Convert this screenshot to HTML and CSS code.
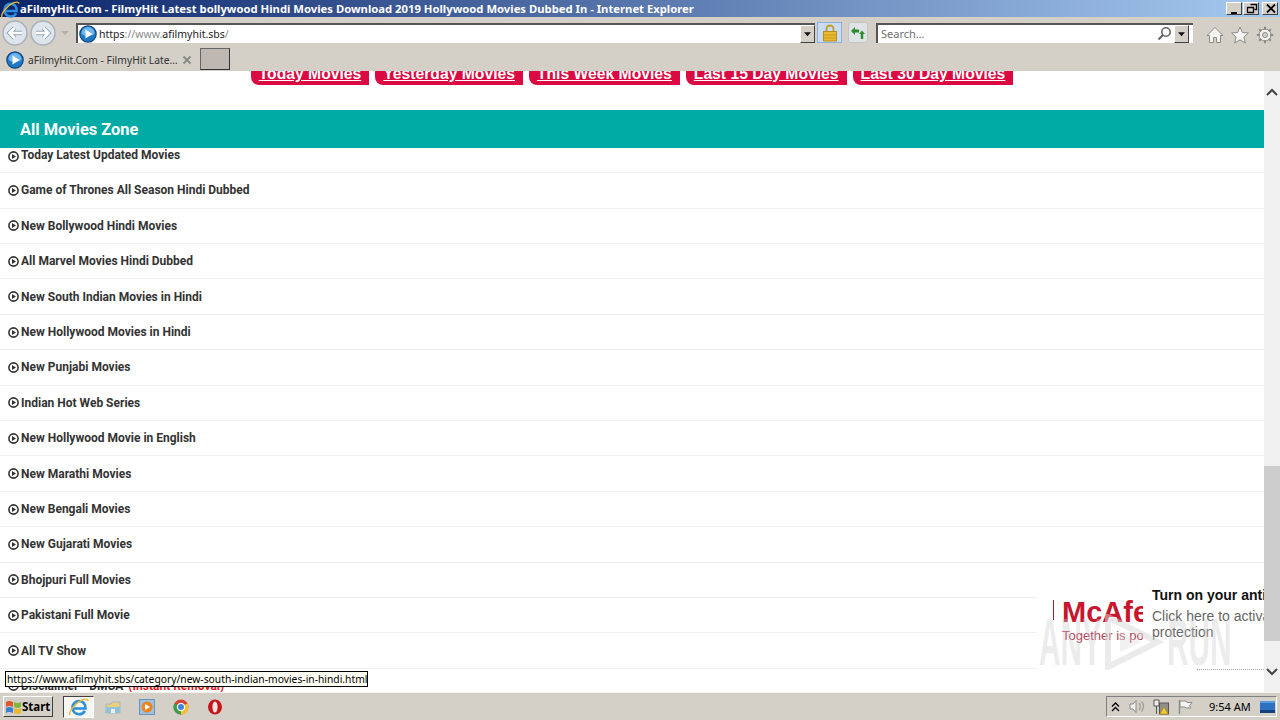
FILE: index.html
```html
<!DOCTYPE html>
<html lang="en">
<head>
    <meta charset="UTF-8">
    <meta name="viewport" content="width=device-width, initial-scale=1.0">
    <title>aFilmyHit.Com - FilmyHit Latest bollywood Hindi Movies</title>
    <link rel="stylesheet" href="styles.css">
</head>
<body>
    <!-- shared icons -->
    <svg class="defs" width="0" height="0">
        <symbol id="ie-play" viewBox="0 0 18 18">
            <circle cx="9" cy="9" r="8.2" fill="#1f78c8" stroke="#14497f" stroke-width="1.2"/>
            <path d="M2.5 8a6.5 6 0 0 1 13 0a6.5 3 0 0 1-13 0z" fill="#6fb6ec"/>
            <path d="M6.5 4.5l7 4.5l-7 4.5z" fill="#fff"/>
        </symbol>
        <symbol id="ie-logo" viewBox="0 0 20 20">
            <path d="M4 11.5h12.5c.3-4.5-2.5-7.5-6.3-7.5c-3.8 0-6.7 3-6.7 6.7c0 3.8 2.8 6.6 6.6 6.6c2.6 0 4.700-1.200 5.700-3.400" fill="none" stroke="#2b8fdc" stroke-width="2.600"/>
            <path d="M1 18c-1.500-3 5-12 12-15c3-1.200 6-1.300 6 1" fill="none" stroke="#e8b93a" stroke-width="1.400"/>
        </symbol>
        <symbol id="bullet" viewBox="0 0 11 11">
            <circle cx="5.500" cy="5.500" r="4.600" fill="none" stroke="#333" stroke-width="1.600"/>
            <path d="M4 2.900l4 2.600l-4 2.600z" fill="#333"/>
        </symbol>
        <symbol id="drop" viewBox="0 0 15 18">
            <path d="M3.500 7h8l-4 4.500z" fill="#111"/>
        </symbol>
    </svg>

    <div class="titlebar">
        <svg class="title-logo" width="19" height="19"><use href="#ie-logo"/></svg>
        <span class="title-text">aFilmyHit.Com - FilmyHit Latest bollywood Hindi Movies Download 2019 Hollywood Movies Dubbed In - Internet Explorer</span>
        <div class="win-buttons">
            <span class="win-btn"><svg width="16" height="13"><path d="M4 10h6v2H4z" fill="#000"/></svg></span>
            <span class="win-btn"><svg width="16" height="13"><path d="M6.500 2.500h6v5h-2M3.500 5.500h6v5h-6z" fill="none" stroke="#000" stroke-width="1.300"/></svg></span>
            <span class="win-btn win-close"><svg width="16" height="13"><path d="M4 2.500l8 8M12 2.500l-8 8" fill="none" stroke="#000" stroke-width="1.800"/></svg></span>
        </div>
    </div>

    <div class="toolbar">
        <svg class="nav-arrows" width="72" height="28" viewBox="0 0 72 28">
            <circle cx="13" cy="14" r="12" fill="#dfe5ec" stroke="#a9b0b8" stroke-width="1.500"/>
            <circle cx="41" cy="14" r="12" fill="#dfe5ec" stroke="#a9b0b8" stroke-width="1.500"/>
            <path d="M20 14H8M12.500 9l-5 5l5 5" fill="none" stroke="#93a6ba" stroke-width="4.500"/>
            <path d="M34 14h12M41.500 9l5 5l-5 5" fill="none" stroke="#93a6ba" stroke-width="4.500"/>
            <path d="M20 14H8M12.500 9l-5 5l5 5" fill="none" stroke="#fff" stroke-width="2.500"/>
            <path d="M34 14h12M41.500 9l5 5l-5 5" fill="none" stroke="#fff" stroke-width="2.500"/>
            <path d="M59 12h8l-4 4z" fill="#b4b0a8"/>
        </svg>
        <div class="address-box">
            <svg width="18" height="18"><use href="#ie-play"/></svg>
            <span class="address-text">https<span class="dim">://www.</span>afilmyhit.sbs<span class="dim">/</span></span>
            <svg class="drop-btn" width="15" height="18"><use href="#drop"/></svg>
        </div>
        <div class="lock-btn">
            <svg width="16" height="18" viewBox="0 0 16 18">
                <path d="M4.500 8V4.500a3.500 3 0 0 1 7 0V8" fill="none" stroke="#c79a22" stroke-width="1.800"/>
                <rect x="1.500" y="7.500" width="13" height="9.500" fill="#eab92f" stroke="#b98d1c"/>
                <path d="M2 11h12M2 14h12" stroke="#c79a22"/>
            </svg>
        </div>
        <div class="refresh-btn">
            <svg width="16" height="16" viewBox="0 0 16 16">
                <path d="M1 6l4-4v2.500h4V7.500H5V10z" fill="#2e8b2e"/>
                <path d="M15 9l-3-3.500L9 9h1.800v5h2.400V9z" fill="#2e8b2e"/>
            </svg>
        </div>
        <div class="search-box">
            <span class="search-text">Search…</span>
            <svg class="search-glass" width="15" height="15" viewBox="0 0 15 15">
                <circle cx="9" cy="6" r="4.200" fill="none" stroke="#666" stroke-width="1.600"/>
                <path d="M6 9l-4.500 4.500" stroke="#666" stroke-width="2.200"/>
            </svg>
            <svg class="drop-btn" width="15" height="18"><use href="#drop"/></svg>
        </div>
        <div class="tools">
            <svg width="18" height="18" viewBox="0 0 18 18">
                <path d="M9 1.500L1 9.500h2.500v7h4v-5h3v5h4v-7H17z" fill="#f4f4f2" stroke="#8a8a86"/>
            </svg>
            <svg width="18" height="18" viewBox="0 0 18 18">
                <path d="M9 1l2.400 5.500l6 .5l-4.500 4l1.400 6L9 13.800L3.700 17l1.400-6L.6 7l6-.5z" fill="#f4f4f2" stroke="#8a8a86"/>
            </svg>
            <svg width="18" height="18" viewBox="0 0 18 18">
                <circle cx="9" cy="9" r="6" fill="#f0f0ee" stroke="#8a8a86" stroke-width="1"/>
                <circle cx="9" cy="9" r="2.500" fill="#d4d0c8" stroke="#8a8a86"/>
                <path d="M9 .8v3M9 14.200v3M.8 9h3M14.200 9h3M3.200 3.200l2 2M12.800 12.800l2 2M14.800 3.200l-2 2M5.200 12.800l-2 2" stroke="#8a8a86" stroke-width="2"/>
            </svg>
        </div>
    </div>

    <div class="tabrow">
        <div class="tab">
            <svg width="18" height="18"><use href="#ie-play"/></svg>
            <span class="tab-title">aFilmyHit.Com - FilmyHit Late…</span>
            <svg class="tab-close" width="10" height="10"><path d="M1.500 1.500l7 7M8.500 1.500l-7 7" stroke="#8a8a86" stroke-width="2"/></svg>
        </div>
        <div class="new-tab"></div>
    </div>

    <div class="viewport">
        <div class="page">
            <div class="pills">
                <a class="pill">Today Movies</a>
                <a class="pill">Yesterday Movies</a>
                <a class="pill">This Week Movies</a>
                <a class="pill">Last 15 Day Movies</a>
                <a class="pill">Last 30 Day Movies</a>
            </div>
            <h2 class="zone-head">All Movies Zone</h2>
            <ul class="movie-list">
                <li class="first-row"><svg width="11" height="11"><use href="#bullet"/></svg>Today Latest Updated Movies</li>
                <li><svg width="11" height="11"><use href="#bullet"/></svg>Game of Thrones All Season Hindi Dubbed</li>
                <li><svg width="11" height="11"><use href="#bullet"/></svg>New Bollywood Hindi Movies</li>
                <li><svg width="11" height="11"><use href="#bullet"/></svg>All Marvel Movies Hindi Dubbed</li>
                <li><svg width="11" height="11"><use href="#bullet"/></svg>New South Indian Movies in Hindi</li>
                <li><svg width="11" height="11"><use href="#bullet"/></svg>New Hollywood Movies in Hindi</li>
                <li><svg width="11" height="11"><use href="#bullet"/></svg>New Punjabi Movies</li>
                <li><svg width="11" height="11"><use href="#bullet"/></svg>Indian Hot Web Series</li>
                <li><svg width="11" height="11"><use href="#bullet"/></svg>New Hollywood Movie in English</li>
                <li><svg width="11" height="11"><use href="#bullet"/></svg>New Marathi Movies</li>
                <li><svg width="11" height="11"><use href="#bullet"/></svg>New Bengali Movies</li>
                <li><svg width="11" height="11"><use href="#bullet"/></svg>New Gujarati Movies</li>
                <li><svg width="11" height="11"><use href="#bullet"/></svg>Bhojpuri Full Movies</li>
                <li><svg width="11" height="11"><use href="#bullet"/></svg>Pakistani Full Movie</li>
                <li><svg width="11" height="11"><use href="#bullet"/></svg>All TV Show</li>
                <li><svg width="11" height="11"><use href="#bullet"/></svg>Disclaimer - DMCA&nbsp;<span class="red">(Instant Removal)</span></li>
            </ul>
        </div>

        <div class="scrollbar">
            <svg class="scroll-arrow" width="16" height="16"><path d="M3 10l5-5l5 5" fill="none" stroke="#444" stroke-width="2"/></svg>
            <div class="scroll-track"><div class="scroll-thumb"></div></div>
            <svg class="scroll-arrow" width="16" height="16"><path d="M3 6l5 5l5-5" fill="none" stroke="#444" stroke-width="2"/></svg>
        </div>

        <!-- ad popup in the bottom corner -->
        <div class="popup">
            <div class="popup-logo">
                <div class="mcafee">McAfee</div>
                <div class="mcafee-sub">Together is power</div>
            </div>
            <div class="popup-copy">
                <div class="popup-title">Turn on your antivirus</div>
                <div class="popup-text">Click here to activate<br>protection</div>
            </div>
        </div>

        <div class="watermark">
            <span class="wm-word">ANY</span>
            <svg width="60" height="56" viewBox="0 0 60 56">
                <path d="M4 3l50 25L4 53z" fill="none" stroke="#d8d8d8" stroke-width="6" opacity=".5"/>
                <path d="M16 18l22 10l-22 10z" fill="#d8d8d8" opacity=".35"/>
            </svg>
            <span class="wm-word">RUN</span>
        </div>
        <div class="dotted-line"></div>

        <div class="status-tip">https://www.afilmyhit.sbs/category/new-south-indian-movies-in-hindi.html</div>
    </div>

    <div class="taskbar">
        <div class="start-btn">
            <svg width="17" height="16" viewBox="0 0 17 16">
                <path d="M1 3c2-1.500 4-1.500 7 0v5c-3-1.500-5-1.500-7 0z" fill="#e2562b"/>
                <path d="M9 3c2.500 1.300 4.500 1.300 7 0v5c-2.500 1.300-4.500 1.300-7 0z" fill="#7cb83c"/>
                <path d="M1 9c2-1.500 4-1.500 7 0v5c-3-1.500-5-1.500-7 0z" fill="#3b80d0"/>
                <path d="M9 9c2.500 1.300 4.500 1.300 7 0v5c-2.500 1.300-4.500 1.300-7 0z" fill="#edb92c"/>
            </svg>
            <span>Start</span>
        </div>
        <div class="task-btn"><svg width="20" height="20"><use href="#ie-logo"/></svg></div>
        <div class="task-icons">
            <svg width="16" height="16" viewBox="0 0 16 16">
                <path d="M1 5h5l1-2h8v11H1z" fill="#e9cf7e" stroke="#a8b8c0"/>
                <path d="M1 8h14v6H1z" fill="#8fc3d8"/>
                <path d="M6 10h4v4H6z" fill="#e9f0f2"/>
            </svg>
            <svg width="16" height="16" viewBox="0 0 16 16">
                <rect x=".5" y=".5" width="15" height="15" fill="#9cc0de" stroke="#6d93b5"/>
                <circle cx="8" cy="8" r="5.500" fill="#ee8420"/>
                <path d="M6 5l5 3l-5 3z" fill="#fff"/>
            </svg>
            <svg width="16" height="16" viewBox="0 0 16 16">
                <circle cx="8" cy="8" r="7.500" fill="#d8412f"/>
                <path d="M8 8L14.500 4.200A7.500 7.500 0 0 1 8 15.500z" fill="#f2c22e"/>
                <path d="M8 8L8 15.500A7.500 7.500 0 0 1 1.500 4.200z" fill="#3d9d4a"/>
                <circle cx="8" cy="8" r="3.600" fill="#3f86d8" stroke="#fff" stroke-width="1.200"/>
            </svg>
            <svg width="16" height="16" viewBox="0 0 16 16">
                <ellipse cx="8" cy="8" rx="7" ry="7.500" fill="#c8141c"/>
                <ellipse cx="8" cy="8" rx="2.600" ry="5.500" fill="#f3e4e0"/>
            </svg>
        </div>
        <div class="tray">
            <svg width="9" height="10" viewBox="0 0 9 10"><path d="M1 4.500l3.500-3.500l3.500 3.500M1 9l3.500-3.500L8 9" fill="none" stroke="#000" stroke-width="1.300"/></svg>
            <svg class="tray-speaker" width="17" height="15" viewBox="0 0 17 15">
                <path d="M1 5h3l3-3.500v12L4 10H1z" fill="#f0f0ee" stroke="#8a8a86"/>
                <path d="M10 4c1.500 2 1.500 5 0 7M12.500 2.500c2.500 3 2.500 7 0 10" fill="none" stroke="#a0a09c" stroke-width="1.300"/>
            </svg>
            <svg class="tray-net" width="17" height="16" viewBox="0 0 17 16">
                <path d="M1 1h5v6H1zM3.500 7v8" fill="#eee" stroke="#555"/>
                <rect x="6.500" y="4" width="9" height="11" fill="#8f8f86" stroke="#555"/>
                <path d="M11 8l4 7H7z" fill="#f4cc2e" stroke="#a98a12" stroke-width=".6"/>
            </svg>
            <svg class="tray-flag" width="16" height="16" viewBox="0 0 16 16">
                <path d="M2.500 1v14" stroke="#8a8a86" stroke-width="1.400"/>
                <path d="M3 2h6l1 1.500h5l-2.500 3l1.500 2.500H9L8 8H3z" fill="#f4f4f2" stroke="#8a8a86"/>
            </svg>
            <span class="clock">9:54 AM</span>
            <svg width="15" height="12" viewBox="0 0 15 12">
                <rect width="15" height="12" fill="#2d72c2"/>
                <rect y="9" width="15" height="3" fill="#16417c"/>
                <path d="M0 0h15v2H0z" fill="#5a9be0"/>
            </svg>
        </div>
    </div>
</body>
</html>
```

FILE: styles.css
```css
* {
    box-sizing: border-box;
}
html, body {
    margin: 0;
    padding: 0;
}
body {
    width: 1280px;
    height: 720px;
    overflow: hidden;
    display: flex;
    flex-direction: column;
    background-color: #d4d0c8;
    font-family: "Noto Sans", sans-serif;
}
svg {
    display: block;
    flex-shrink: 0;
}
.defs {
    position: absolute;
}

/* window chrome */
.titlebar {
    height: 17px;
    display: flex;
    align-items: center;
    padding-left: 1px;
    background: linear-gradient(to right, #0a246a, #a6caf0);
    color: #fff;
}
.title-logo {
    margin-top: 1px;
}
.title-text {
    font-size: 11.27px;
    font-weight: bold;
    white-space: nowrap;
}
.win-buttons {
    margin-left: auto;
    margin-right: 2px;
    display: flex;
    gap: 1px;
}
.win-btn {
    width: 16px;
    height: 13px;
    background-color: #d4d0c8;
    border: 1px solid;
    border-color: #fff #404040 #404040 #fff;
    display: flex;
    align-items: center;
    justify-content: center;
}
.win-btn svg {
    flex-shrink: 1;
}
.win-close {
    margin-left: 2px;
}

.toolbar {
    height: 31px;
    display: flex;
    align-items: center;
    padding-left: 2px;
}
.address-box {
    width: 739px;
    height: 20px;
    margin-left: 2px;
    display: flex;
    align-items: center;
    padding-left: 1px;
    background-color: #fff;
    border-top: 2px solid #555;
    border-left: 2px solid #555;
}
.address-text {
    margin-left: 2px;
    font-size: 10.5px;
    color: #222;
}
.dim {
    color: #8a8a8a;
}
.drop-btn {
    margin-left: auto;
    background-color: #d4d0c8;
    border: 1px solid;
    border-color: #fff #404040 #404040 #fff;
}
.lock-btn {
    width: 25px;
    height: 21px;
    margin-left: 2px;
    display: flex;
    align-items: center;
    justify-content: center;
    background-color: #c9dcf6;
    border: 1px solid #8fb0dc;
}
.refresh-btn {
    width: 20px;
    height: 21px;
    margin-left: 6px;
    display: flex;
    align-items: center;
    justify-content: center;
    background-color: #dfe3e6;
    border: 1px solid #c4c6c4;
    border-radius: 3px;
}
.search-box {
    width: 317px;
    height: 20px;
    margin-left: 8px;
    display: flex;
    align-items: center;
    padding: 0 4px 0 3px;
    background-color: #fff;
    border-top: 2px solid #555;
    border-left: 2px solid #555;
}
.search-text {
    font-size: 11px;
    color: #6f6f6f;
}
.search-glass {
    margin-left: auto;
    margin-right: 1px;
}
.search-box .drop-btn {
    margin-left: 1px;
}
.tools {
    margin-left: 13px;
    margin-top: 5px;
    display: flex;
    gap: 7px;
}

.tabrow {
    height: 23px;
    display: flex;
    align-items: stretch;
}
.tab {
    width: 195px;
    display: flex;
    align-items: center;
    padding-left: 6px;
}
.tab-title {
    margin-left: 4px;
    font-size: 10.3px;
    color: #333;
    white-space: nowrap;
}
.tab-close {
    margin-left: auto;
    margin-right: 3px;
}
.new-tab {
    width: 30px;
    height: 22px;
    margin-left: 5px;
    background-color: #bfb8b2;
    border: 1px solid;
    border-color: #666 #333 #333 #666;
}

/* browser content */
.viewport {
    position: relative;
    height: 621px;
    display: flex;
    overflow: hidden;
    background-color: #fff;
}
.page {
    width: 1264px;
    overflow: hidden;
    font-family: Roboto, sans-serif;
    background-color: #fff;
}
.pills {
    height: 14px;
    display: flex;
    align-items: flex-end;
    justify-content: center;
    gap: 6px;
    overflow: hidden;
}
.pill {
    flex-shrink: 0;
    padding: 0 8px 2px;
    background-color: #dc0a42;
    border-radius: 8px 0 0 8px;
    color: #fff;
    font-family: "Liberation Sans", sans-serif;
    font-size: 15.7px;
    font-weight: bold;
    line-height: 18px;
    text-decoration: underline;
}
.zone-head {
    height: 38px;
    margin: 25px 0 0;
    padding-left: 20px;
    background-color: #00aba5;
    color: #fff;
    font-size: 16.4px;
    font-weight: bold;
    line-height: 40px;
}
.movie-list {
    margin: 0;
    padding: 0;
    list-style: none;
}
.movie-list li {
    height: 35.4px;
    display: flex;
    align-items: center;
    gap: 2px;
    padding-left: 8px;
    border-bottom: 1px solid #f0f0f0;
    color: #333;
    font-size: 12px;
    font-weight: bold;
}
.movie-list .first-row {
    height: 25.3px;
    align-items: flex-end;
    padding-bottom: 10px;
}
.red {
    color: #e81c1c;
}

.scrollbar {
    width: 16px;
    display: flex;
    flex-direction: column;
    background-color: #f0f0f0;
}
.scroll-arrow {
    margin: 14px 0 0;
}
.scroll-track {
    flex: 1;
    padding-top: 365px;
}
.scroll-thumb {
    height: 175px;
    background-color: #cdcdcd;
}
.scroll-arrow:last-child {
    margin: 0 0 13px;
}

.popup {
    position: absolute;
    left: 1037px;
    top: 509px;
    width: 227px;
    height: 98px;
    display: flex;
    overflow: hidden;
    background-color: #fff;
    font-family: "Liberation Sans", sans-serif;
}
.popup-logo {
    flex-shrink: 0;
    width: 90px;
    height: 70px;
    margin: 20px 0 0 16px;
    padding-left: 9px;
    overflow: hidden;
    position: relative;
}
.popup-logo::before {
    content: "";
    position: absolute;
    left: 0;
    top: 0;
    width: 1px;
    height: 20px;
    background-color: #a0192e;
}
.mcafee {
    color: #c8162c;
    font-size: 29px;
    font-weight: bold;
    line-height: 24px;
    white-space: nowrap;
}
.mcafee-sub {
    margin-top: 4px;
    color: #b04458;
    font-size: 13px;
    white-space: nowrap;
}
.popup-copy {
    margin: 7px 0 0 9px;
    white-space: nowrap;
}
.popup-title {
    color: #111;
    font-size: 14px;
    font-weight: bold;
    line-height: 17px;
}
.popup-text {
    margin-top: 4px;
    color: #666;
    font-size: 14px;
    line-height: 16px;
}

.watermark {
    position: absolute;
    left: 1039px;
    top: 543px;
    display: flex;
    align-items: center;
    gap: 3px;
    pointer-events: none;
}
.wm-word {
    width: 62px;
    color: rgba(200, 200, 200, 0.35);
    font-family: "Liberation Sans", sans-serif;
    font-size: 66px;
    font-weight: bold;
    line-height: 56px;
    transform: scaleX(0.45);
    transform-origin: left center;
    white-space: nowrap;
}
.dotted-line {
    position: absolute;
    left: 1197px;
    top: 598px;
    width: 67px;
    border-top: 1px dotted #aaa;
}
.status-tip {
    position: absolute;
    left: 5px;
    top: 600px;
    width: 363px;
    height: 16px;
    padding-left: 1px;
    background-color: #fffff5;
    border: 1px solid #000;
    color: #000;
    font-size: 10.3px;
    line-height: 14px;
    white-space: nowrap;
    overflow: hidden;
}

/* taskbar */
.taskbar {
    height: 28px;
    display: flex;
    align-items: center;
    padding-left: 3px;
    background-color: #d4d0c8;
    border-top: 1px solid #f4f2ee;
}
.start-btn {
    width: 50px;
    height: 21px;
    display: flex;
    align-items: center;
    gap: 0;
    padding-left: 1px;
    background-color: #d4d0c8;
    border: 1px solid;
    border-color: #fff #404040 #404040 #fff;
    font-size: 11.5px;
    font-weight: bold;
    color: #000;
}
.task-btn {
    width: 31px;
    height: 22px;
    margin-left: 10px;
    display: flex;
    align-items: center;
    justify-content: center;
    background-color: #f6f5f2;
    border: 1px solid;
    border-color: #404040 #fff #fff #404040;
}
.task-icons {
    margin-left: 11px;
    display: flex;
    gap: 18px;
}
.tray {
    width: 171px;
    height: 21px;
    margin-left: auto;
    margin-right: 3px;
    display: flex;
    align-items: center;
    padding-left: 4px;
    border: 1px solid;
    border-color: #808080 #fff #fff #808080;
}
.tray-speaker {
    margin-left: 9px;
}
.tray-net {
    margin-left: 7px;
}
.tray-flag {
    margin-left: 7px;
}
.clock {
    margin-left: 16px;
    font-size: 11px;
    color: #000;
    white-space: nowrap;
}
.tray svg:last-child {
    margin-left: auto;
    margin-right: 1px;
}
```
